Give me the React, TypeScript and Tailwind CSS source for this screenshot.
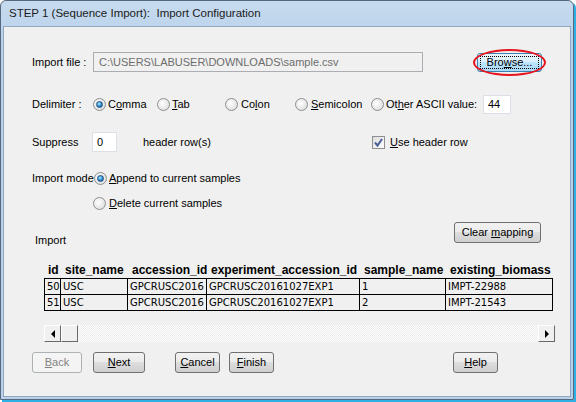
import React from 'react';

const Radio = ({ checked }: { checked?: boolean }) => (
  <span className="w-[13px] h-[13px] rounded-full border border-[#8e8f8f] bg-[radial-gradient(circle_at_40%_40%,#ffffff,#d6d6d6)] flex items-center justify-center shrink-0">
    {checked && (
      <span className="w-[7px] h-[7px] rounded-full border border-[#1c5180] bg-[radial-gradient(circle_at_40%_35%,#b6ecff,#2a8ad0_55%,#0e4f8c)]" />
    )}
  </span>
);

const Check = () => (
  <span className="w-[13px] h-[13px] border border-[#8e8f8f] bg-[linear-gradient(135deg,#dcdcdc,#ffffff)] flex items-center justify-center shrink-0">
    <svg width="11" height="11" viewBox="0 0 11 11">
      <path d="M2 5.5 L4.5 8.5 L9 2" fill="none" stroke="#4a5f97" strokeWidth="2" />
    </svg>
  </span>
);

const btn =
  'h-[21px] rounded-[3px] border border-[#707070] bg-[linear-gradient(#f2f2f2_0%,#ebebeb_45%,#dddddd_50%,#cfcfcf_100%)] flex items-center justify-center text-black shrink-0';

const U = ({ children }: { children: React.ReactNode }) => <span className="underline">{children}</span>;

const cols = ['w-[17px]', 'w-[67px]', 'w-[79px]', 'w-[153px]', 'w-[86px]', 'w-[107px]'];
const headers = ['id', 'site_name', 'accession_id', 'experiment_accession_id', 'sample_name', 'existing_biomass'];
const rows = [
  ['50', 'USC', 'GPCRUSC2016', 'GPCRUSC20161027EXP1', '1', 'IMPT-22988'],
  ['51', 'USC', 'GPCRUSC2016', 'GPCRUSC20161027EXP1', '2', 'IMPT-21543'],
];

export default function App() {
  return (
    <div className="w-[576px] h-[402px] bg-white font-['Liberation_Sans',Arial,sans-serif] text-[11px] text-black">
      <div className="w-[574px] h-[400px] border border-[#55697e] rounded-t-[6px] bg-[linear-gradient(#c7dbef,#b9d1ea_40px)] px-[2px] pb-[2px] flex flex-col shadow-[2px_2px_0_0_#2fb0e4]">
        {/* Title bar */}
        <div className="h-[25px] flex items-center pl-[6px] text-[11.5px] text-[#1b1b1b] whitespace-pre">
          STEP 1 (Sequence Import):  Import Configuration
        </div>

        {/* Client area */}
        <div className="flex-1 bg-[#f0f0f0] border border-[#8fa7c0] pl-[28px] flex flex-col">
          {/* Import file */}
          <div className="mt-[25px] h-[20px] flex items-center">
            <span className="w-[61px] whitespace-nowrap">Import file :</span>
            <div className="w-[330px] h-[20px] border border-[#abadb3] bg-[#f0f0f0] text-[#6d6d6d] flex items-center pl-[5px]">
              C:\USERS\LABUSER\DOWNLOADS\sample.csv
            </div>
            <div className="relative ml-[54px] mt-[1px]">
              <div className="w-[65px] h-[19px] rounded-[3px] border border-[#3c7fb1] bg-[linear-gradient(#eaf6fd_0%,#d9f0fc_45%,#bee6fd_50%,#a7d9f5_100%)] p-[2px]">
                <div className="w-full h-full border border-dotted border-black flex items-center justify-center">
                  <span>Bro<U>w</U>se...</span>
                </div>
              </div>
              <div className="absolute left-[-4px] top-[-4px] w-[73px] h-[27px] rounded-[50%] border-2 border-[#e5141f]" />
            </div>
          </div>

          {/* Delimiter */}
          <div className="mt-[22px] h-[20px] flex items-center">
            <span className="w-[61px] whitespace-nowrap">Delimiter :</span>
            <div className="w-[64px] flex items-center gap-[2px]">
              <Radio checked />
              <span>C<U>o</U>mma</span>
            </div>
            <div className="w-[68px] flex items-center gap-[2px]">
              <Radio />
              <span><U>T</U>ab</span>
            </div>
            <div className="w-[70px] flex items-center gap-[3px]">
              <Radio />
              <span>Co<U>l</U>on</span>
            </div>
            <div className="w-[76px] flex items-center gap-[3px]">
              <Radio />
              <span><U>S</U>emicolon</span>
            </div>
            <div className="w-[112px] flex items-center gap-[2px]">
              <Radio />
              <span className="whitespace-nowrap">Ot<U>h</U>er ASCII value:</span>
            </div>
            <div className="w-[28px] h-[19px] border border-[#dbdfe6] bg-white flex items-center pl-[4px]">44</div>
          </div>

          {/* Suppress */}
          <div className="mt-[18px] h-[20px] flex items-center">
            <span className="w-[60px]">Suppress</span>
            <div className="w-[25px] h-[20px] border border-[#dbdfe6] bg-white flex items-center pl-[4px]">0</div>
            <span className="ml-[26px] w-[229px]">header row(s)</span>
            <div className="flex items-center gap-[5px]">
              <Check />
              <span><U>U</U>se header row</span>
            </div>
          </div>

          {/* Import mode */}
          <div className="mt-[18px] h-[16px] flex items-center">
            <span className="w-[62px] whitespace-nowrap">Import mode</span>
            <Radio checked />
            <span className="ml-[2px]"><U>A</U>ppend to current samples</span>
          </div>
          <div className="mt-[9px] h-[16px] flex items-center pl-[61px]">
            <Radio />
            <span className="ml-[3px]"><U>D</U>elete current samples</span>
          </div>

          {/* Import label + Clear mapping */}
          <div className="mt-[11px] h-[26px] flex">
            <span className="w-[422px] self-end pl-[3px]">Import</span>
            <div className={`${btn} w-[87px]`}>
              <span>Clear <U>m</U>apping</span>
            </div>
          </div>

          {/* Table */}
          <div className="mt-[15px] ml-[12px] flex flex-col">
            <div className="h-[15px] flex font-bold text-[12px] leading-[15px]">
              {headers.map((h, i) => (
                <div key={h} className={`${cols[i]} pl-[4px] whitespace-nowrap`}>
                  {h}
                </div>
              ))}
            </div>
            <div className="w-fit border-l border-t border-black font-['DejaVu_Sans',sans-serif] text-[10px]">
              {rows.map((r, ri) => (
                <div key={ri} className="flex h-[16px]">
                  {r.map((c, i) => (
                    <div
                      key={i}
                      className={`${i === 0 ? 'w-[16px]' : cols[i]} border-r border-b border-black pl-[2px] overflow-hidden whitespace-nowrap flex items-center`}
                    >
                      {c}
                    </div>
                  ))}
                </div>
              ))}
            </div>
          </div>

          {/* Scrollbar */}
          <div className="mt-[14px] ml-[12px] w-[511px] h-[17px] flex">
            <div className="w-[17px] h-[17px] bg-[#f0f0f0] border border-t-white border-l-white border-r-[#696969] border-b-[#696969] flex items-center justify-center">
              <span className="w-0 h-0 border-y-[4px] border-y-transparent border-r-[4px] border-r-black" />
            </div>
            <div className="w-[17px] h-[17px] bg-[#f0f0f0] border border-t-white border-l-white border-r-[#696969] border-b-[#696969]" />
            <div className="flex-1 bg-[repeating-conic-gradient(#ffffff_0_25%,#ebebeb_0_50%)] bg-[length:2px_2px]" />
            <div className="w-[17px] h-[17px] bg-[#f0f0f0] border border-t-white border-l-white border-r-[#696969] border-b-[#696969] flex items-center justify-center">
              <span className="w-0 h-0 border-y-[4px] border-y-transparent border-l-[4px] border-l-black" />
            </div>
          </div>

          {/* Buttons */}
          <div className="mt-[10px] h-[21px] flex">
            <div className="w-[50px] h-[21px] rounded-[3px] border border-[#adb2b5] bg-[#f4f4f4] text-[#838383] flex items-center justify-center">
              <span><U>B</U>ack</span>
            </div>
            <div className={`${btn} w-[52px] ml-[11px]`}>
              <span><U>N</U>ext</span>
            </div>
            <div className={`${btn} w-[45px] ml-[30px]`}>
              <span><U>C</U>ancel</span>
            </div>
            <div className={`${btn} w-[45px] ml-[9px]`}>
              <span><U>F</U>inish</span>
            </div>
            <div className={`${btn} w-[45px] ml-[179px]`}>
              <span><U>H</U>elp</span>
            </div>
          </div>
        </div>
      </div>
    </div>
  );
}
